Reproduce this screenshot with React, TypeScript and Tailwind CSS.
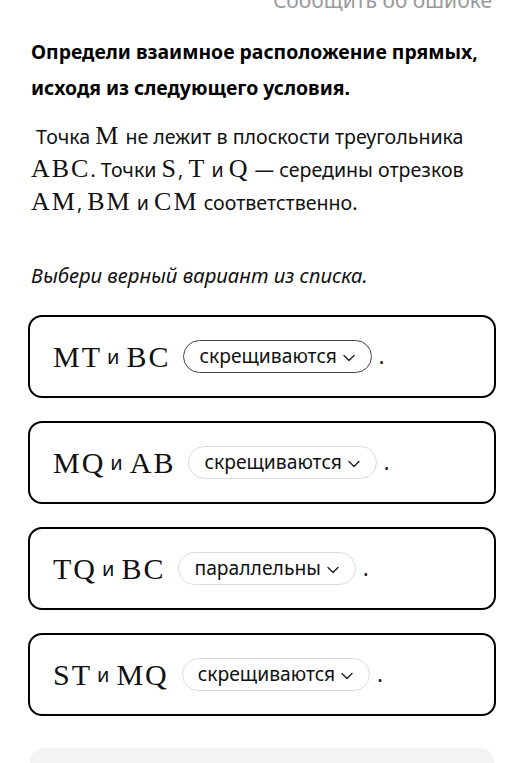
import React from "react";

const M = ({ children, big }: { children: React.ReactNode; big?: boolean }) => (
  <span
    className={`font-['Liberation_Serif','DejaVu_Serif',serif] leading-none ${
      big ? "text-[30px] tracking-[2px]" : "text-[26px] tracking-[2px]"
    }`}
  >
    {children}
  </span>
);

const Chevron = () => (
  <svg width="12" height="8" viewBox="0 0 12 8" fill="none" className="ml-[6px] mt-[3px]">
    <path d="M1 1.5 L6 6.5 L11 1.5" stroke="#222" strokeWidth="1.4" strokeLinecap="round" strokeLinejoin="round" />
  </svg>
);

const Pill = ({ label, active }: { label: string; active?: boolean }) => (
  <span
    className={`inline-flex items-center h-[33px] rounded-full bg-white pl-[15px] pr-[16px] text-[19.3px] text-[#111] border ${
      active ? "border-[#444]" : "border-[#dcdcdc]"
    }`}
  >
    {label}
    <Chevron />
  </span>
);

const Card = ({ a, b, label, active }: { a: string; b: string; label: string; active?: boolean }) => (
  <div className="h-[83px] rounded-[14px] border-2 border-black flex items-center pl-[23px]">
    <M big>{a}</M>
    <span className="text-[20px] ml-[5px] mr-[7px]">и</span>
    <M big>{b}</M>
    <span className="ml-[13px]">
      <Pill label={label} active={active} />
    </span>
    <span className="ml-[7px] text-[21px]">.</span>
  </div>
);

export default function App() {
  return (
    <div className="w-[525px] h-[763px] overflow-hidden bg-white font-['Noto_Sans','Open_Sans',sans-serif] text-[#111]">
      <div className="text-right pr-[33px] -mt-[14px] text-[21px] leading-[28px] text-[#9a9a9a]">Сообщить об ошибке</div>
      <div className="px-[28px]">
        <h1 className="mt-[20px] pl-[3px] font-bold text-[19.4px] leading-[36px] text-black">
          Определи взаимное расположение прямых, исходя из следующего условия.
        </h1>
        <p className="mt-[14px] pl-[3px] text-[19.6px] leading-[33px]">
          &nbsp;Точка <M>M</M> не лежит в плоскости треугольника <M>ABC</M>. Точки <M>S</M>, <M>T</M> и{" "}
          <M>Q</M> — середины отрезков <M>AM</M>, <M>BM</M> и <M>CM</M> соответственно.
        </p>
        <p className="mt-[40px] pl-[3px] italic text-[20.3px] leading-[33px]">Выбери верный вариант из списка.</p>
        <div className="mt-[23px] flex flex-col gap-[23px] w-[468px]">
          <Card a="MT" b="BC" label="скрещиваются" active />
          <Card a="MQ" b="AB" label="скрещиваются" />
          <Card a="TQ" b="BC" label="параллельны" />
          <Card a="ST" b="MQ" label="скрещиваются" />
        </div>
        <div className="mt-[32px] ml-[2px] w-[464px] h-[60px] rounded-[14px] bg-[#f3f3f3]" />
      </div>
    </div>
  );
}
